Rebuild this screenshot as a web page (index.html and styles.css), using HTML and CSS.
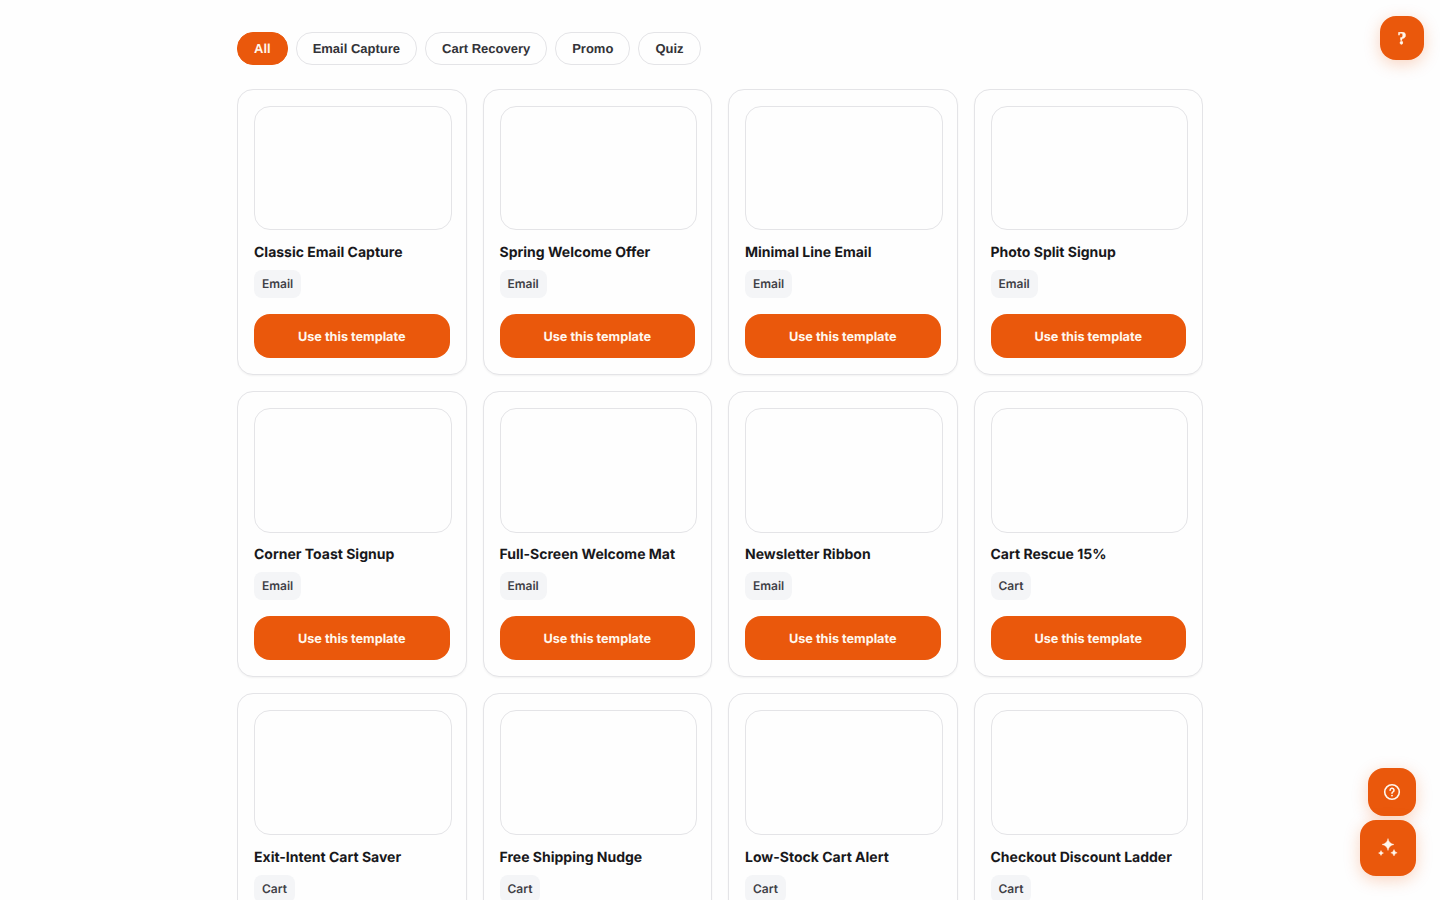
FILE: index.html
```
<!DOCTYPE html>
<html lang="en">
<head>
<meta charset="utf-8">
<title>Templates</title>
<link rel="stylesheet" href="styles.css">
</head>
<body>
<main class="page">
  <nav class="filters">
    <button class="chip chip-active">All</button>
    <button class="chip">Email Capture</button>
    <button class="chip">Cart Recovery</button>
    <button class="chip">Promo</button>
    <button class="chip">Quiz</button>
  </nav>
  <section class="grid">
    <article class="card"><div class="preview"></div><h3 class="title">Classic Email Capture</h3><span class="tag">Email</span><button class="use">Use this template</button></article>
    <article class="card"><div class="preview"></div><h3 class="title">Spring Welcome Offer</h3><span class="tag">Email</span><button class="use">Use this template</button></article>
    <article class="card"><div class="preview"></div><h3 class="title">Minimal Line Email</h3><span class="tag">Email</span><button class="use">Use this template</button></article>
    <article class="card"><div class="preview"></div><h3 class="title">Photo Split Signup</h3><span class="tag">Email</span><button class="use">Use this template</button></article>
    <article class="card"><div class="preview"></div><h3 class="title">Corner Toast Signup</h3><span class="tag">Email</span><button class="use">Use this template</button></article>
    <article class="card"><div class="preview"></div><h3 class="title">Full-Screen Welcome Mat</h3><span class="tag">Email</span><button class="use">Use this template</button></article>
    <article class="card"><div class="preview"></div><h3 class="title">Newsletter Ribbon</h3><span class="tag">Email</span><button class="use">Use this template</button></article>
    <article class="card"><div class="preview"></div><h3 class="title">Cart Rescue 15%</h3><span class="tag">Cart</span><button class="use">Use this template</button></article>
    <article class="card"><div class="preview"></div><h3 class="title">Exit-Intent Cart Saver</h3><span class="tag">Cart</span></article>
    <article class="card"><div class="preview"></div><h3 class="title">Free Shipping Nudge</h3><span class="tag">Cart</span></article>
    <article class="card"><div class="preview"></div><h3 class="title">Low-Stock Cart Alert</h3><span class="tag">Cart</span></article>
    <article class="card"><div class="preview"></div><h3 class="title">Checkout Discount Ladder</h3><span class="tag">Cart</span></article>
  </section>
</main>
<button class="fab fab-help">?</button>
<div class="fab-stack">
  <button class="fab fab-support" aria-label="Support">
    <svg width="18" height="18" viewBox="0 0 18 18" fill="none" stroke="currentColor" stroke-width="1.6" stroke-linecap="round" stroke-linejoin="round"><circle cx="9" cy="9" r="7.3"/><path d="M7.1 7.200a1.950 1.950 0 1 1 2.900 1.700c-.7.4-1 .7-1 1.400"/><circle cx="9" cy="12.6" r=".95" fill="currentColor" stroke="none"/></svg>
  </button>
  <button class="fab fab-assistant" aria-label="Assistant">
    <svg width="20" height="20" viewBox="0 0 20 20" fill="currentColor" stroke="currentColor" stroke-width=".4"><path d="M10 .5Q10.900 5.600 16 6.500 10.900 7.400 10 12.500 9.100 7.400 4 6.500 9.100 5.600 10 .5Z"/><path d="M3 12.500Q3.500 14.500 5.500 15 3.500 15.500 3 17.500 2.500 15.500.5 15 2.500 14.500 3 12.500Z"/><path d="M16 11.500Q16.600 14.200 19.200 14.800 16.600 15.400 16 18 15.400 15.400 12.800 14.800 15.400 14.200 16 11.500Z"/></svg>
  </button>
</div>
</body>
</html>
```
FILE: styles.css
```
* { box-sizing: border-box; }
body {
  margin: 0;
  height: 900px;
  overflow: hidden;
  background: #fefefe;
  color: #18181b;
  font-family: Inter, sans-serif;
  text-rendering: geometricPrecision;
}
button { margin: 0; border: 0; text-rendering: inherit; }
.page { width: 966px; height: 900px; margin: 0 auto; padding-top: 32px; overflow: hidden; }
.filters { display: flex; gap: 8px; margin-bottom: 24px; }
.chip {
  height: 33.300px;
  padding: 0 16px;
  border: 1px solid #e4e4e7;
  border-radius: 16px;
  background: #fefefe;
  color: #333338;
  font: bold 13px "Liberation Sans", Arial, sans-serif;
}
.chip-active { background: #ea580c; border-color: #ea580c; color: #fff7ed; }
.grid { display: grid; grid-template-columns: repeat(4, 1fr); grid-auto-rows: 286.100px; gap: 16px; }
.card {
  display: flex;
  flex-direction: column;
  align-items: flex-start;
  padding: 16px;
  border: 1px solid #e4e4e7;
  border-radius: 16px;
  background: #fefefe;
  box-shadow: 0 1px 2px rgba(0, 0, 0, .05);
}
.preview {
  box-sizing: content-box;
  width: 100%;
  height: 122.200px;
  flex: none;
  border: 1px solid #e4e4e7;
  border-radius: 16px;
}
.title { margin: 12.850px 0 7.200px; font-size: 14px; font-weight: 650; line-height: 19.800px; white-space: nowrap; }
.tag {
  flex: none;
  height: 28px;
  padding: 0 8px;
  border-radius: 8px;
  background: #f4f5f7;
  color: #3f3f46;
  font-size: 12px;
  font-weight: 560;
  line-height: 28px;
}
.use {
  flex: none;
  width: 100%;
  height: 44px;
  margin-top: 15.950px;
  padding: 2px 0 0;
  border-radius: 16px;
  background: #ea580c;
  color: #fff7ed;
  font: 650 12.700px Inter, sans-serif;
}
.fab {
  display: flex;
  align-items: center;
  justify-content: center;
  padding: 0;
  border-radius: 16px;
  background: #ea580c;
  color: #fff7ed;
  box-shadow: 0 4px 16px rgba(234, 88, 12, .25);
}
.fab-help {
  position: fixed;
  top: 16px;
  right: 16px;
  width: 44px;
  height: 44px;
  font: bold 18px "Liberation Serif", serif;
  -webkit-text-stroke: .4px currentColor;
}
.fab-stack {
  position: fixed;
  right: 24px;
  bottom: 24px;
  display: flex;
  flex-direction: column;
  align-items: flex-end;
  gap: 4px;
}
.fab-support { width: 48px; height: 48px; }
.fab-assistant { width: 56px; height: 56px; }
```
